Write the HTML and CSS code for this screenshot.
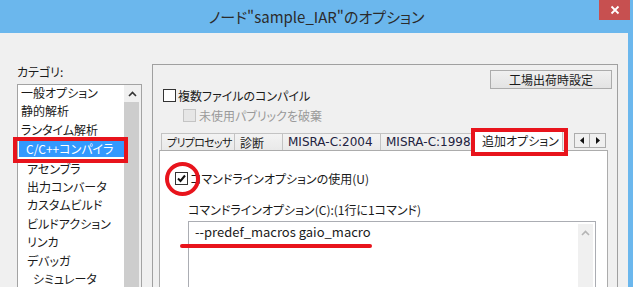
FILE: index.html
```html
<!DOCTYPE html>
<html lang="ja">
<head>
    <meta charset="UTF-8">
    <title>ノード"sample_IAR"のオプション</title>
    <link rel="stylesheet" href="styles.css">
</head>
<body>
    <div class="window">
        <div class="titlebar">
            <span class="title">ノード"sample_IAR"のオプション</span>
            <span class="close">
                <svg width="10" height="10" viewBox="0 0 10 10"><path d="M1.5 1.5 L8.5 8.5 M8.5 1.5 L1.5 8.5" stroke="#fff" stroke-width="1.8"/></svg>
            </span>
        </div>

        <div class="client">
            <!-- left: category list -->
            <div class="category">
                <div class="cat-label">カテゴリ:</div>
                <div class="listbox">
                    <ul class="items">
                        <li>一般オプション</li>
                        <li>静的解析</li>
                        <li>ランタイム解析</li>
                        <li class="selected"><span>C/C++コンパイラ</span></li>
                        <li class="sub">アセンブラ</li>
                        <li class="sub">出力コンバータ</li>
                        <li class="sub">カスタムビルド</li>
                        <li class="sub">ビルドアクション</li>
                        <li class="sub">リンカ</li>
                        <li class="sub">デバッガ</li>
                        <li class="subsub">シミュレータ</li>
                    </ul>
                    <div class="vscroll">
                        <div class="arrow">
                            <svg width="9" height="6" viewBox="0 0 9 6"><path d="M1 5 L4.5 1.5 L8 5" fill="none" stroke="#333" stroke-width="1.6"/></svg>
                        </div>
                        <div class="thumb"></div>
                    </div>
                </div>
            </div>

            <!-- right: options -->
            <div class="options">
                <div class="opt-head">
                    <button class="btn">工場出荷時設定</button>
                </div>
                <div class="check row1"><span class="box"></span><span>複数ファイルのコンパイル</span></div>
                <div class="check row2 disabled"><span class="box"></span><span>未使用パブリックを破棄</span></div>

                <div class="tabctl">
                    <div class="tabstrip">
                        <div class="tab t1">プリプロセッサ</div>
                        <div class="tab t2">診断</div>
                        <div class="tab t3">MISRA-C:2004</div>
                        <div class="tab t4">MISRA-C:1998</div>
                        <div class="tab active">追加オプション</div>
                        <div class="tabnav">
                            <span class="navbtn"><svg width="4" height="7" viewBox="0 0 4 7"><path d="M4 0 L0 3.5 L4 7 Z" fill="#111"/></svg></span>
                            <span class="navbtn"><svg width="4" height="7" viewBox="0 0 4 7"><path d="M0 0 L4 3.5 L0 7 Z" fill="#111"/></svg></span>
                        </div>
                    </div>
                    <div class="tabpanel">
                        <div class="check use"><span class="box checked"><svg width="11" height="11" viewBox="0 0 11 11"><path d="M2 5.5 L4.5 8 L9 2.5" fill="none" stroke="#111" stroke-width="2"/></svg></span><span>コマンドラインオプションの使用(U)</span></div>
                        <div class="cmd-label">コマンドラインオプション(C):(1行に1コマンド)</div>
                        <div class="cmdbox">
                            <div class="cmdtext">--predef_macros gaio_macro</div>
                            <div class="cmdscroll">
                                <svg width="9" height="6" viewBox="0 0 9 6"><path d="M1 5 L4.5 1.5 L8 5" fill="none" stroke="#b4b4b4" stroke-width="1.6"/></svg>
                            </div>
                        </div>
                    </div>
                </div>
            </div>
        </div>

        <!-- red annotations drawn over the dialog -->
        <div class="mark mark-sel"></div>
        <div class="mark mark-tab"></div>
        <div class="mark mark-circle"></div>
        <div class="mark-line"></div>
    </div>
</body>
</html>
```

FILE: styles.css
```css
/* Dialog window */
body {
    margin: 0;
    font-family: "Noto Sans CJK JP", sans-serif;
    font-size: 12px;
    font-feature-settings: "palt";
    color: #1a1a1a;
    background: #f0f0f0;
}
.window {
    position: relative;
    width: 633px;
    height: 287px;
    overflow: hidden;
    background: #6bb7ed;
}
.titlebar {
    height: 33px;
    display: flex;
    align-items: center;
    justify-content: center;
}
.title {
    font-size: 15px;
    color: #2b2b2b;
    margin-top: -1px;
}
.close {
    position: absolute;
    left: 599px;
    top: 0;
    width: 31px;
    height: 20px;
    background: #c75050;
    display: flex;
    align-items: center;
    justify-content: center;
}
.client {
    display: flex;
    height: 254px;
    margin-right: 5px;
    padding: 31px 0 0 17px;
    box-sizing: border-box;
    background: #f0f0f0;
    overflow: hidden;
}

/* Category list */
.category {
    width: 125px;
    flex-shrink: 0;
}
.cat-label {
    line-height: 16px;
    margin-bottom: 4px;
}
.listbox {
    display: flex;
    height: 300px;
    border: 1px solid #a3a3a3;
    background: #fff;
}
.items {
    flex: 1;
    list-style: none;
    margin: -1px 0 0;
    padding: 0;
}
.items li {
    height: 18.4px;
    line-height: 18.4px;
    padding-left: 3px;
    white-space: nowrap;
}
.items li.sub {
    padding-left: 9px;
}
.items li.subsub {
    padding-left: 15px;
}
.items li.selected {
    padding-left: 1px;
}
.items li.selected span {
    display: block;
    margin-top: 2px;
    height: 16px;
    line-height: 16px;
    padding-left: 7px;
    background: #3399ff;
    color: #fff;
}
.vscroll {
    width: 17px;
    display: flex;
    flex-direction: column;
    background: #f0f0f0;
}
.vscroll .arrow {
    height: 17px;
    display: flex;
    align-items: center;
    justify-content: center;
}
.vscroll .thumb {
    flex: 1;
    margin-right: 2px;
    background: #cdcdcd;
}

/* Options panel */
.options {
    width: 466px;
    height: 300px;
    margin-left: 10px;
    flex-shrink: 0;
    border: 1px solid #a0a0a0;
    box-sizing: border-box;
}
.opt-head {
    display: flex;
    justify-content: flex-end;
    padding: 5px 5px 0 0;
}
.btn {
    width: 122px;
    height: 19px;
    padding: 0;
    font-family: inherit;
    font-size: 12px;
    font-feature-settings: "palt";
    color: #1a1a1a;
    border: 1px solid #acacac;
    background: linear-gradient(#f0f0f0, #e3e3e3);
}
.check {
    display: flex;
    align-items: center;
    height: 13px;
    line-height: 16px;
    white-space: nowrap;
}
.check .box {
    width: 13px;
    height: 13px;
    box-sizing: border-box;
    border: 1px solid #333;
    background: #fff;
    margin-right: 2px;
    flex-shrink: 0;
    display: flex;
    align-items: center;
    justify-content: center;
}
.check.row1 {
    margin-left: 10px;
}
.check.row2 {
    margin: 7px 0 0 30px;
    color: #9a9a9a;
}
.check.row2 .box {
    border-color: #c4c4c4;
    background: #e6e6e6;
    margin-right: 3px;
}

/* Tab control */
.tabctl {
    margin: 11px 0 0 6px;
    width: 449px;
}
.tabstrip {
    display: flex;
    align-items: flex-end;
    height: 17px;
    padding-left: 2px;
}
.tab {
    height: 17px;
    line-height: 17px;
    box-sizing: border-box;
    border: 1px solid #c3c3c3;
    border-bottom: none;
    border-left: none;
    background: linear-gradient(#f3f3f3, #e9e9e9);
    padding-left: 5px;
    white-space: nowrap;
    overflow: hidden;
}
.tab.t1 {
    width: 74px;
    padding-left: 5px;
    font-size: 11px;
    letter-spacing: -0.7px;
    border-left: 1px solid #c3c3c3;
}
.tab.t2 {
    width: 48px;
}
.tab.t3 {
    width: 98px;
}
.tab.t4 {
    width: 94px;
}
.tab.t3, .tab.t4 {
    font-family: "DejaVu Sans", sans-serif;
    font-size: 12px;
    color: #222240;
}
.tab.active {
    width: 90px;
    height: 21px;
    line-height: 20px;
    margin-left: -2px;
    margin-bottom: -1px;
    background: #fff;
    border-left: 1px solid #c3c3c3;
    padding-left: 8px;
    position: relative;
}
.tabnav {
    display: flex;
    margin-left: auto;
    margin-right: 2px;
    align-self: flex-start;
}
.navbtn {
    width: 16px;
    height: 15px;
    box-sizing: border-box;
    border: 1px solid #acacac;
    background: #f0f0f0;
    display: flex;
    align-items: center;
    justify-content: center;
}
.navbtn + .navbtn {
    border-left: none;
}
.tabpanel {
    height: 200px;
    border: 1px solid #acacac;
    background: #fff;
    padding: 21px 0 0 15px;
}
.check.use .box {
    border-color: #333;
}
.cmd-label {
    margin: 17px 0 0 13px;
    line-height: 16px;
    white-space: nowrap;
}
.cmdbox {
    display: flex;
    margin: 3px 0 0 13px;
    width: 408px;
    height: 120px;
    box-sizing: border-box;
    border: 1px solid #abadb3;
}
.cmdtext {
    flex: 1;
    padding: 2px 0 0 6px;
    font-size: 13px;
    line-height: 16px;
    font-feature-settings: normal;
}
.cmdscroll {
    width: 15px;
    margin: 2px 2px 0 0;
    background: #f0f0f0;
    display: flex;
    justify-content: center;
    padding-top: 6px;
    box-sizing: border-box;
}

/* Red annotations */
.mark {
    position: absolute;
    box-sizing: border-box;
    border: 4px solid #e8141c;
}
.mark-sel {
    left: 13px;
    top: 137px;
    width: 115px;
    height: 26px;
}
.mark-tab {
    left: 471px;
    top: 128px;
    width: 97px;
    height: 28px;
}
.mark-circle {
    left: 165px;
    top: 162px;
    width: 35px;
    height: 34px;
    border-radius: 50%;
}
.mark-line {
    position: absolute;
    left: 180px;
    top: 244px;
    width: 192px;
    height: 4px;
    border-radius: 2px;
    background: #e8141c;
}
```
